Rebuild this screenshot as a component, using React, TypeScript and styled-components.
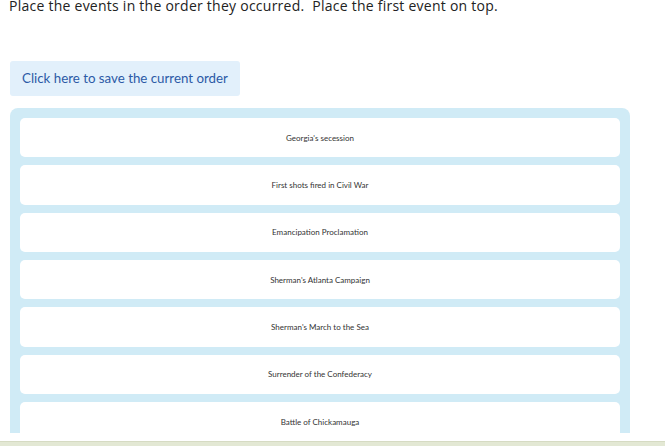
import React from "react";
import styled, { createGlobalStyle } from "styled-components";

const Global = createGlobalStyle`
  html, body { margin: 0; padding: 0; background: #ffffff; }
  body { overflow: hidden; }
`;

const Page = styled.div`
  height: 446px;
  display: flex;
  flex-direction: column;
`;

const Main = styled.main`
  height: 433px;
  flex: none;
  overflow: hidden;
  padding: 0 35px 0 10px;
  display: flex;
  flex-direction: column;
`;

const Heading = styled.p`
  flex: none;
  margin: 0 0 0 -1px;
  font-family: "Open Sans", "Noto Sans", sans-serif;
  font-size: 14px;
  line-height: 12px;
  color: #222;
  letter-spacing: 0.25px;
`;

const SaveButton = styled.button`
  flex: none;
  align-self: flex-start;
  margin-top: 49px;
  width: 230px;
  height: 35px;
  border: none;
  border-radius: 3px;
  background: #e2f0fb;
  color: #2c5aa6;
  font-family: Lato, sans-serif;
  font-size: 13.3px;
  text-align: left;
  padding: 0 12px 2px;
  cursor: pointer;
`;

const List = styled.div`
  flex: none;
  margin-top: 12px;
  background: #d0ebf6;
  border-radius: 8px;
  padding: 10px 10px;
  display: flex;
  flex-direction: column;
  gap: 8px;
`;

const Item = styled.div`
  height: 39.33px;
  flex: none;
  background: #ffffff;
  border-radius: 5px;
  display: flex;
  align-items: center;
  justify-content: center;
  font-family: Lato, sans-serif;
  font-size: 8px;
  color: #333;
`;

const Footer = styled.footer`
  margin-top: 8px;
  flex: 1;
  background: #e3e8d4;
  border-top: 1px solid #d6dbc3;
`;

const events = [
  "Georgia's secession",
  "First shots fired in Civil War",
  "Emancipation Proclamation",
  "Sherman's Atlanta Campaign",
  "Sherman's March to the Sea",
  "Surrender of the Confederacy",
  "Battle of Chickamauga",
];

export default function App() {
  return (
    <Page>
      <Global />
      <Main>
        <Heading>Place the events in the order they occurred.&nbsp; Place the first event on top.</Heading>
        <SaveButton>Click here to save the current order</SaveButton>
        <List>
          {events.map((e) => (
            <Item key={e}>{e}</Item>
          ))}
        </List>
      </Main>
      <Footer />
    </Page>
  );
}
